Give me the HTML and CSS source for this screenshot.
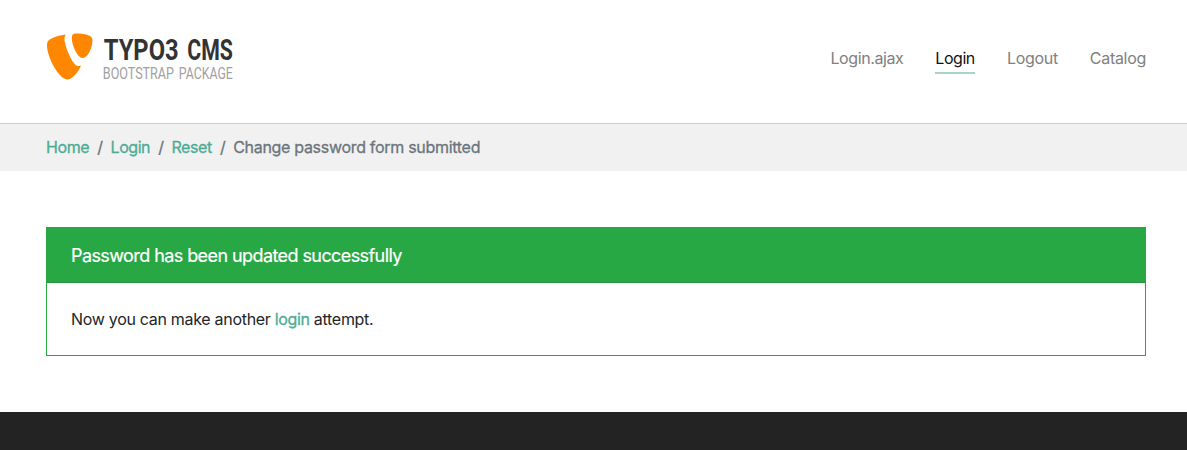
FILE: index.html
```html
<!DOCTYPE html>
<html lang="en">
<head>
<meta charset="utf-8">
<title>Change password form submitted</title>
<link rel="stylesheet" href="styles.css">
</head>
<body>
<header class="header">
  <a class="logo" href="#">
    <svg width="192" height="52" viewBox="0 0 192 52" role="img" aria-label="TYPO3 CMS Bootstrap Package">
      <path class="mark" d="M35.1 32.8C34.3 33 33.6 33.1 32.7 33.1C26 33.1 18.5 11 18.5 6.4C18.5 4 18.9 2.6 19.9 1.5C12 2.4 4.3 5.2 1.9 8.2C1.3 9 1 10.5 1 12.3C1 24.4 13.2 46.6 21.6 46.6C25.5 46.6 31 41.1 35.1 32.8ZM29.7.6C38.1.6 46.5 2 46.5 7.1C46.5 15.3 41.6 25 37 25C31.2 25 25.8 11.6 25.8 4.9C25.8 1.8 27 .6 29.7.6Z"/>
      <text class="brand" x="57.8" y="26.6" textLength="74.8" lengthAdjust="spacingAndGlyphs">TYPO3</text>
      <text class="brand" x="141.3" y="26.6" textLength="45.6" lengthAdjust="spacingAndGlyphs">CMS</text>
      <text class="brand-sub" x="56.8" y="45.5" textLength="71.2" lengthAdjust="spacingAndGlyphs">BOOTSTRAP</text>
      <text class="brand-sub" x="132.8" y="45.5" textLength="54" lengthAdjust="spacingAndGlyphs">PACKAGE</text>
    </svg>
  </a>
  <nav class="nav">
    <a class="nav-link nav-ajax" href="#">Login.ajax</a>
    <a class="nav-link active" href="#">Login</a>
    <a class="nav-link" href="#">Logout</a>
    <a class="nav-link" href="#">Catalog</a>
  </nav>
</header>
<nav class="breadcrumb">
  <a href="#">Home</a><span class="sep">/</span><a class="tight" href="#">Login</a><span class="sep">/</span><a href="#">Reset</a><span class="sep">/</span><span class="current">Change password form submitted</span>
</nav>
<main class="content">
  <section class="card">
    <h1 class="card-header"><span>Password has been updated successfully</span></h1>
    <p class="card-body"><span>Now you can make another <a href="#">login</a> attempt.</span></p>
  </section>
</main>
<footer class="footer"></footer>
</body>
</html>
```
FILE: styles.css
```css
* { box-sizing: border-box; }
body {
  margin: 0;
  height: 450px;
  overflow: hidden;
  display: flex;
  flex-direction: column;
  background: #fff;
  color: #212529;
  font: 400 16px/24px Inter, "Liberation Sans", sans-serif;
  letter-spacing: -0.3px;
}
a { color: #4dab94; text-decoration: none; }
.header {
  height: 124px;
  padding: 33px 41px 0 46px;
  display: flex;
  justify-content: space-between;
  align-items: flex-start;
  border-bottom: 1px solid #ccc;
}
.logo svg { display: block; }
.mark { fill: #ff8700; }
.brand {
  font: 700 28.6px/1 Roboto, sans-serif;
  letter-spacing: 0;
  fill: #333;
}
.brand-sub {
  font: 400 16.4px/1 Roboto, sans-serif;
  letter-spacing: 0;
  fill: #a0a0a0;
}
.nav { display: flex; gap: 32px; padding-top: 13px; }
.nav-link { height: 28px; color: #808080; white-space: nowrap; }
.nav-link.active { letter-spacing: -0.45px; color: #111; border-bottom: 2px solid #a6d5c9; }
.nav-ajax { letter-spacing: -0.41px; }
.breadcrumb {
  height: 47px;
  padding: 11px 46px 0;
  display: flex;
  background: #f1f1f1;
  color: #6c757d;
  letter-spacing: -0.38px;
  -webkit-text-stroke: .3px;
}
.breadcrumb .tight { letter-spacing: -0.45px; }
.breadcrumb .current { letter-spacing: -0.3px; }
.sep { padding: 0 8px; letter-spacing: -0.5px; }
.content { padding: 56px 41px 56px 46px; }
.card { height: 129px; border: 1px solid #28a745; }
.card-header {
  margin: 0;
  height: 55px;
  padding: 16px 24px 0;
  border-bottom: 1px solid #24963e;
  background: #28a745;
  color: #fff;
  font-size: 18px;
  font-weight: 400;
  line-height: 24px;
  letter-spacing: -0.58px;
  -webkit-text-stroke: .2px;
}
.card-body { margin: 0; padding: 24px; }
.card-body a { letter-spacing: -0.35px; -webkit-text-stroke: .3px; }
.footer { flex: 1; background: #232323; }
```
